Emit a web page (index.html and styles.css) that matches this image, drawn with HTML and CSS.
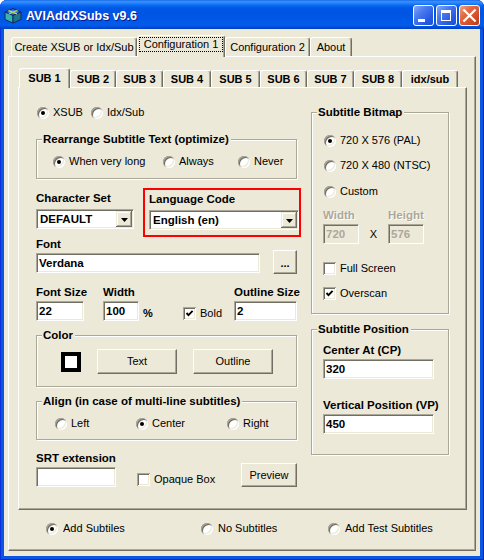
FILE: index.html
```html
<!DOCTYPE html>
<html>
<head>
<meta charset="utf-8">
<title>AVIAddXSubs v9.6</title>
<link rel="stylesheet" href="styles.css">
</head>
<body>
<div class="window">
  <div class="titlebar">
    <svg class="appicon" viewBox="0 0 18 18" width="18" height="18">
      <polygon points="1,6 9,2.5 17,6 9,9.5" fill="#3C6FD9" stroke="#0E1F5C" stroke-width="0.9"/>
      <polygon points="1,6 9,9.5 9,17 1,13.5" fill="#34B5AE" stroke="#0E1F5C" stroke-width="0.9"/>
      <polygon points="9,9.5 17,6 17,13.5 9,17" fill="#1E7788" stroke="#0E1F5C" stroke-width="0.9"/>
      <line x1="4.5" y1="4.5" x2="13" y2="8" stroke="#F4E23C" stroke-width="1.3"/>
      <line x1="13.5" y1="4.3" x2="5" y2="7.8" stroke="#9FE04A" stroke-width="1.3"/>
    </svg>
    <span class="title">AVIAddXSubs v9.6</span>
    <div class="tbtns">
      <div class="tbtn tb-min"><span class="min-glyph"></span></div>
      <div class="tbtn tb-max"><span class="max-glyph"></span></div>
      <div class="tbtn tb-close">
        <svg viewBox="0 0 19 19" width="19" height="19"><path d="M4.2 4.2 L14.8 14.8 M14.8 4.2 L4.2 14.8" stroke="#fff" stroke-width="2.2" stroke-linecap="square"/></svg>
      </div>
    </div>
  </div>

  <div class="client">
    <div class="tabs outer-tabs">
      <div class="tab t-create">Create XSUB or Idx/Sub</div>
      <div class="tab sel t-conf1"><span class="focus">Configuration 1</span></div>
      <div class="tab t-conf2">Configuration 2</div>
      <div class="tab t-about">About</div>
    </div>

    <div class="panel outer-panel">
      <div class="tabs inner-tabs">
        <div class="tab sel">SUB 1</div>
        <div class="tab">SUB 2</div>
        <div class="tab">SUB 3</div>
        <div class="tab">SUB 4</div>
        <div class="tab">SUB 5</div>
        <div class="tab">SUB 6</div>
        <div class="tab">SUB 7</div>
        <div class="tab">SUB 8</div>
        <div class="tab">idx/sub</div>
      </div>

      <div class="panel inner-panel">
        <div class="lcol">
          <div class="row mode-row">
            <div class="opt w54"><span class="radio on"></span>XSUB</div>
            <div class="opt"><span class="radio"></span>Idx/Sub</div>
          </div>

          <div class="group g-rearr">
            <div class="gtitle">Rearrange Subtitle Text (optimize)</div>
            <div class="row rearr-row">
              <div class="opt w110"><span class="radio on"></span>When very long</div>
              <div class="opt w75"><span class="radio"></span>Always</div>
              <div class="opt"><span class="radio"></span>Never</div>
            </div>
          </div>

          <div class="row cs-row">
            <div class="cs">
              <div class="lbl">Character Set</div>
              <div class="select w98"><span class="val">DEFAULT</span><span class="drop"><svg viewBox="0 0 7 4" width="7" height="4"><polygon points="0,0 7,0 3.5,4" fill="#000"/></svg></span></div>
            </div>
            <div class="langbox">
              <div class="lbl">Language Code</div>
              <div class="select w150"><span class="val">English (en)</span><span class="drop"><svg viewBox="0 0 7 4" width="7" height="4"><polygon points="0,0 7,0 3.5,4" fill="#000"/></svg></span></div>
            </div>
          </div>

          <div class="lbl font-lbl">Font</div>
          <div class="row font-row">
            <div class="input w225">Verdana</div>
            <div class="btn dots">...</div>
          </div>

          <div class="row sizes-row">
            <div class="field w48"><div class="lbl">Font Size</div><div class="input">22</div></div>
            <div class="field wfield">
              <div class="lbl">Width</div>
              <div class="inrow"><div class="input w36">100</div><span class="pct">%</span></div>
            </div>
            <div class="opt chk-bold"><span class="check"><svg viewBox="0 0 13 13" width="13" height="13"><polyline points="3.5,6 5.5,8.2 9.6,3.9" fill="none" stroke="#000" stroke-width="1.9"/></svg></span>Bold</div>
            <div class="field w63"><div class="lbl">Outline Size</div><div class="input">2</div></div>
          </div>

          <div class="group g-color">
            <div class="gtitle">Color</div>
            <div class="row color-row">
              <span class="swatch"></span>
              <div class="btn cbtn">Text</div>
              <div class="btn cbtn">Outline</div>
            </div>
          </div>

          <div class="group g-align">
            <div class="gtitle">Align (in case of multi-line subtitles)</div>
            <div class="row align-row">
              <div class="opt w81"><span class="radio"></span>Left</div>
              <div class="opt w91"><span class="radio on"></span>Center</div>
              <div class="opt"><span class="radio"></span>Right</div>
            </div>
          </div>

          <div class="row srt-row">
            <div class="field"><div class="lbl">SRT extension</div><div class="input w80"></div></div>
            <div class="opt opaque"><span class="check"></span>Opaque Box</div>
            <div class="btn preview">Preview</div>
          </div>
        </div>

        <div class="rcol">
          <div class="group g-bitmap">
            <div class="gtitle">Subtitle Bitmap</div>
            <div class="opt bm bm-pal"><span class="radio on"></span>720 X 576 (PAL)</div>
            <div class="opt bm bm-ntsc"><span class="radio"></span>720 X 480 (NTSC)</div>
            <div class="opt bm bm-custom"><span class="radio"></span>Custom</div>
            <div class="row wh-row">
              <div class="field"><div class="lbl dis">Width</div><div class="input dis w36">720</div></div>
              <span class="xsep">X</span>
              <div class="field"><div class="lbl dis">Height</div><div class="input dis w36">576</div></div>
            </div>
            <div class="opt chk fs"><span class="check"></span>Full Screen</div>
            <div class="opt chk os"><span class="check"><svg viewBox="0 0 13 13" width="13" height="13"><polyline points="3.5,6 5.5,8.2 9.6,3.9" fill="none" stroke="#000" stroke-width="1.9"/></svg></span>Overscan</div>
          </div>

          <div class="group g-pos">
            <div class="gtitle">Subtitle Position</div>
            <div class="lbl cp-lbl">Center At (CP)</div>
            <div class="input w111 pos-in">320</div>
            <div class="lbl vp-lbl">Vertical Position (VP)</div>
            <div class="input w111 pos-in">450</div>
          </div>
        </div>
      </div>

      <div class="row bottom-row">
        <div class="opt g5 w155"><span class="radio on"></span>Add Subtiles</div>
        <div class="opt g5 w127"><span class="radio"></span>No Subtitles</div>
        <div class="opt g5"><span class="radio"></span>Add Test Subtitles</div>
      </div>
    </div>
  </div>
</div>
</body>
</html>
```
FILE: styles.css
```css
* { box-sizing: border-box; }
html, body { margin: 0; padding: 0; background: #fff; }
body {
  width: 484px; height: 560px; overflow: hidden;
  font-family: "Liberation Sans", Arial, sans-serif;
  font-size: 11px; line-height: 13px; color: #000;
}

/* window frame */
.window {
  width: 484px; height: 560px;
  display: flex; flex-direction: column;
  background: #0A55E4;
  border-radius: 7px 7px 0 0;
  overflow: hidden;
  box-shadow: inset 1px 0 #0831D9, inset -1px 0 #0029B8, inset 0 -1px #0029B8;
}
.titlebar {
  height: 29px; flex: none;
  display: flex; align-items: center;
  padding: 0 4px 0 4px;
  border-radius: 7px 7px 0 0;
  background: linear-gradient(to bottom,
    #0A5FE8 0px, #3A8EF9 1px, #2B87FB 3px, #0A6CF3 5px, #0058E6 8px,
    #0055E2 14px, #0059E9 22px, #005CEC 25px, #0050DA 27px, #003DC0 29px);
}
.appicon { flex: none; }
.title {
  margin-left: 4px; padding-top: 2px;
  font: bold 12.5px/14px "Liberation Sans", Arial, sans-serif;
  color: #fff; text-shadow: 1px 1px #0A1889;
}
.tbtns { margin-left: auto; margin-top: 2px; display: flex; gap: 2px; }
.tbtn {
  width: 21px; height: 21px;
  border: 1px solid #fff; border-radius: 3px;
  display: flex;
  background: linear-gradient(135deg, #86A9F8 0%, #4A7BEE 35%, #2659E2 75%, #1E4FD6 100%);
}
.tb-min { align-items: flex-end; }
.min-glyph { width: 7px; height: 3px; background: #fff; margin: 0 0 3px 4px; }
.max-glyph {
  width: 10px; height: 11px; margin: 4px 0 0 4px;
  border: 1px solid #fff; border-top-width: 3px;
}
.tb-close {
  background: linear-gradient(135deg, #F2A285 0%, #E4683F 35%, #D04A23 75%, #B8391A 100%);
}

/* client */
.client {
  flex: 1;
  margin: 0 4px 4px;
  background: #ECE9D8;
  padding: 6px 4px 5px;
  display: flex; flex-direction: column;
}

/* tabs */
.tabs { display: flex; align-items: flex-end; flex: none; position: relative; z-index: 2; }
.tab {
  height: 19px;
  background: #ECE9D8;
  border-top: 1px solid #fff; border-left: 1px solid #fff; border-right: 1px solid #716F64;
  box-shadow: inset -1px 0 #ACA899;
  border-radius: 3px 3px 0 0;
  display: flex; align-items: center; justify-content: center;
  white-space: nowrap;
}
.outer-tabs { height: 21px; margin-left: 3px; }
.outer-tabs .tab.sel { height: 22px; margin-bottom: -1px; align-items: flex-start; padding-top: 1px; }
.t-create { width: 126px; }
.t-conf1 { width: 88px; }
.t-conf2 { width: 85px; }
.t-about { width: 42px; }
.focus {
  width: 84px; height: 15px;
  border: 1px dotted #000;
  display: flex; align-items: center; justify-content: center;
}

.panel {
  position: relative; z-index: 1;
  border: 1px solid; border-color: #fff #716F64 #716F64 #fff;
  box-shadow: inset -1px -1px #ACA899;
  background: #ECE9D8;
}
.outer-panel { height: 495px; padding: 11px 0 0 9px; }

.inner-tabs { height: 19px; margin-left: 1px; font-weight: bold; }
.inner-tabs .tab { height: 17px; }
.inner-tabs .tab.sel { height: 20px; margin-bottom: -1px; }
.inner-tabs .tab:nth-child(1) { width: 51px; }
.inner-tabs .tab:nth-child(2) { width: 46px; }
.inner-tabs .tab:nth-child(3) { width: 47px; }
.inner-tabs .tab:nth-child(4) { width: 48px; }
.inner-tabs .tab:nth-child(5) { width: 49px; }
.inner-tabs .tab:nth-child(6) { width: 47px; }
.inner-tabs .tab:nth-child(7) { width: 47px; }
.inner-tabs .tab:nth-child(8) { width: 48px; }
.inner-tabs .tab:nth-child(9) { width: 56px; }

.inner-panel { width: 449px; height: 423px; display: flex; padding-left: 17px; }
.lcol { width: 261px; display: flex; flex-direction: column; }
.rcol { width: 138px; margin-left: 14px; display: flex; flex-direction: column; }

/* generic controls */
.row { display: flex; }
.opt { display: flex; align-items: center; gap: 4px; height: 13px; white-space: nowrap; flex: none; }
.opt.g5 { gap: 5px; }
.w54 { width: 54px; } .w75 { width: 75px; } .w81 { width: 81px; } .w91 { width: 91px; }
.w110 { width: 110px; } .w127 { width: 127px; } .w155 { width: 155px; }

.radio {
  width: 12px; height: 12px; flex: none;
  border-radius: 50%;
  background: #fff;
  box-shadow: inset 1px 1px #ACA899, inset -1px -1px #fff, inset 2px 2px #716F64, inset -2px -2px #ECE9D8;
  display: flex; align-items: center; justify-content: center;
}
.radio.on::after { content: ""; width: 4px; height: 4px; border-radius: 50%; background: #000; }

.check {
  width: 13px; height: 13px; flex: none;
  background: #fff;
  box-shadow: inset 1px 1px #ACA899, inset -1px -1px #fff, inset 2px 2px #716F64, inset -2px -2px #ECE9D8;
  display: flex;
}

.lbl { font-weight: bold; font-size: 11.5px; line-height: 13px; white-space: nowrap; }
.lbl.dis { color: #ACA899; text-shadow: 1px 1px #fff; }

.input {
  height: 20px;
  background: #fff;
  border: 1px solid; border-color: #ACA899 #fff #fff #ACA899;
  box-shadow: inset 1px 1px #716F64, inset -1px -1px #ECE9D8;
  padding-left: 2px;
  font-weight: bold; font-size: 11.5px; line-height: 18px;
  white-space: nowrap;
}
.input.dis { background: #ECE9D8; color: #ACA899; }
.w36 { width: 36px; } .w80 { width: 80px; } .w111 { width: 111px; } .w225 { width: 225px; }

.select {
  display: flex; height: 20px;
  background: #fff;
  border: 1px solid; border-color: #ACA899 #fff #fff #ACA899;
  box-shadow: inset 1px 1px #716F64, inset -1px -1px #ECE9D8;
  padding: 1px;
}
.select .val { flex: 1; padding-left: 2px; font-weight: bold; font-size: 11.5px; line-height: 16px; white-space: nowrap; }
.select .drop {
  width: 16px; height: 16px; flex: none;
  background: #ECE9D8;
  box-shadow: inset -1px -1px #716F64, inset 1px 1px #ECE9D8, inset -2px -2px #ACA899, inset 2px 2px #fff;
  display: flex; align-items: center; justify-content: center;
  padding-top: 1px;
}
.w98 { width: 98px; } .w150 { width: 150px; }

.btn {
  background: #ECE9D8;
  border: 1px solid; border-color: #fff #716F64 #716F64 #fff;
  box-shadow: inset -1px -1px #ACA899;
  display: flex; align-items: center; justify-content: center;
  flex: none;
}

.group {
  border: 1px solid #ACA899;
  box-shadow: inset 1px 1px #fff, 1px 1px #fff;
  flex: none;
}
.gtitle {
  width: fit-content;
  margin: -7px 0 0 5px;
  padding: 0 2px 0 1px;
  background: #ECE9D8;
  font-weight: bold; font-size: 11.5px; line-height: 13px;
  white-space: nowrap;
}
.field { display: flex; flex-direction: column; gap: 2px; flex: none; }

/* left column */
.mode-row { margin: 18px 0 0 1px; }
.g-rearr { margin-top: 20px; height: 40px; }
.rearr-row { margin: 9px 0 0 16px; }

.cs-row { margin-top: 9px; height: 49px; }
.cs { width: 98px; }
.cs .lbl { margin-top: 4px; }
.cs .select { margin-top: 4px; }
.langbox {
  margin-left: 9px; width: 161px; height: 49px;
  border: 2px solid #F00;
  padding: 3px 0 0 4px;
}
.langbox .select { margin-top: 4px; }

.font-lbl { margin-top: 1px; line-height: 12px; }
.font-row { height: 24px; align-items: center; }
.font-row .input { margin-top: 1px; }
.dots { width: 24px; height: 24px; margin-left: 13px; font-weight: bold; padding-top: 2px; }

.sizes-row { margin-top: 12px; align-items: flex-end; }
.w48 { width: 48px; }
.wfield { width: 80px; margin-left: 19px; }
.inrow { display: flex; align-items: flex-end; }
.pct { margin: 0 0 1px 4px; font-weight: bold; font-size: 11px; line-height: 13px; }
.chk-bold { width: 51px; margin-bottom: 1px; }
.w63 { width: 63px; }

.g-color { margin-top: 14px; height: 52px; }
.color-row { margin: 7px 0 0 24px; align-items: center; height: 25px; }
.swatch { width: 20px; height: 20px; border: 4px solid #000; background: #fff; flex: none; }
.cbtn { width: 80px; height: 25px; margin-left: 16px; }

.g-align { margin-top: 14px; height: 39px; }
.align-row { margin: 9px 0 0 18px; }

.srt-row { margin-top: 12px; align-items: flex-end; }
.opaque { margin: 0 0 1px 21px; }
.preview { width: 56px; height: 24px; margin-left: auto; }

/* right column */
.g-bitmap { margin-top: 24px; height: 202px; }
.bm { margin-left: 12px; }
.bm-pal { margin-top: 15px; }
.bm-ntsc { margin-top: 12px; }
.bm-custom { margin-top: 13px; }
.wh-row { margin: 11px 0 0 11px; align-items: flex-end; }
.xsep { width: 29px; text-align: center; margin-bottom: 3px; line-height: 13px; }
.chk { margin-left: 11px; }
.fs { margin-top: 18px; }
.os { margin-top: 12px; }

.g-pos { margin-top: 15px; height: 126px; }
.cp-lbl { margin: 8px 0 0 11px; }
.vp-lbl { margin: 20px 0 0 11px; }
.pos-in { margin: 2px 0 0 11px; }

/* bottom */
.bottom-row { margin: 12px 0 0 28px; }
```
